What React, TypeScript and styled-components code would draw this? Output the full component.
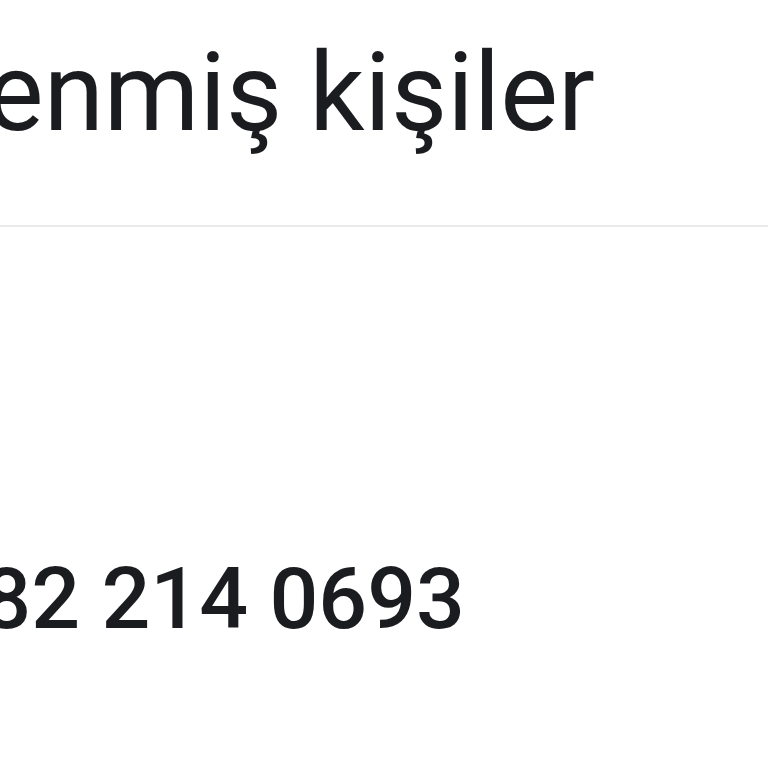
import styled, { createGlobalStyle } from "styled-components";

const GlobalStyle = createGlobalStyle`
    html, body {
        margin: 0;
        padding: 0;
        background: #ffffff;
    }
    body {
        font-family: Roboto, "Noto Sans", Arial, sans-serif;
        color: #1b1c20;
    }
`;

const Screen = styled.div`
    width: 768px;
    height: 768px;
    overflow: hidden;
    display: flex;
    flex-direction: column;
    background: #ffffff;
`;

const Header = styled.div`
    height: 227px;
    display: flex;
    justify-content: flex-end;
    align-items: flex-start;
    padding-right: 173px;
    box-sizing: border-box;
    border-bottom: 2px solid #ece9eb;
`;

const Title = styled.h1`
    margin: 0;
    margin-top: 29px;
    font-size: 109px;
    font-weight: 400;
    line-height: 128px;
    white-space: nowrap;
    flex-shrink: 0;
`;

const Body = styled.div`
    flex: 1;
    display: flex;
    justify-content: flex-end;
    align-items: flex-start;
    padding-right: 303px;
    padding-top: 322px;
`;

const Phone = styled.div`
    font-size: 86px;
    font-weight: 500;
    line-height: 100px;
    white-space: nowrap;
    flex-shrink: 0;
`;

export default function App() {
    return (
        <Screen>
            <GlobalStyle />
            <Header>
                <Title>Engellenmiş kişiler</Title>
            </Header>
            <Body>
                <Phone>+1 582 214 0693</Phone>
            </Body>
        </Screen>
    );
}
